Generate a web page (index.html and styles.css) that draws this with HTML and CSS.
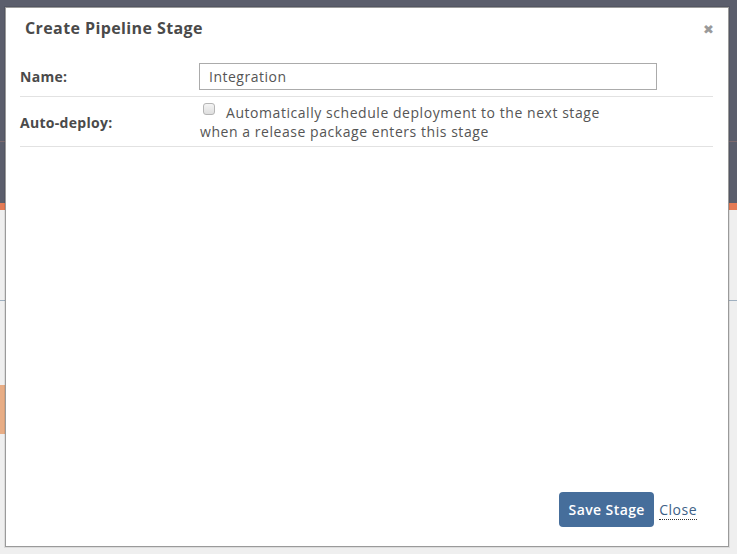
FILE: index.html
```html
<!DOCTYPE html>
<html>
<head>
<meta charset="utf-8">
<link rel="stylesheet" href="styles.css">
</head>
<body>
<div class="page">
  <div class="masthead">
    <div class="masthead-top"></div>
    <div class="masthead-line"></div>
    <div class="masthead-bottom"></div>
  </div>
  <div class="accent-bar"></div>
  <div class="content">
    <div class="content-gap"></div>
    <div class="content-rule"></div>
    <div class="content-gap2"></div>
    <div class="content-block"></div>
  </div>
</div>

<div class="modal">
  <div class="modal-header">
    <h2 class="modal-title">Create Pipeline Stage</h2>
    <span class="modal-close">&#x2716;</span>
  </div>
  <div class="modal-body">
    <div class="form-row row-name">
      <label class="form-label">Name:</label>
      <div class="form-field">
        <input class="text-input" type="text" value="Integration">
      </div>
    </div>
    <div class="form-row row-deploy">
      <label class="form-label">Auto-deploy:</label>
      <div class="form-field deploy-text">
        <span class="check"></span>Automatically schedule deployment to the next stage<br>when a release package enters this stage
      </div>
    </div>
  </div>
  <div class="modal-footer">
    <button class="btn-save">Save Stage</button>
    <a class="link-close">Close</a>
  </div>
</div>
</body>
</html>
```

FILE: styles.css
```css
* { box-sizing: border-box; }
html, body {
  margin: 0;
  padding: 0;
  width: 737px;
  height: 554px;
  overflow: hidden;
  background: #efefef;
  font-family: "Open Sans", "Liberation Sans", sans-serif;
}
.page { display: flex; flex-direction: column; width: 737px; height: 554px; }
.masthead { display: flex; flex-direction: column; }
.masthead-top { height: 141px; background: #5b5e6c; }
.masthead-line { height: 1px; background: #7d6a6e; }
.masthead-bottom { height: 61px; background: #5b5e6c; }
.accent-bar { height: 7px; background: #e57b55; }
.content { display: flex; flex-direction: column; flex: 1; }
.content-gap { height: 90px; }
.content-rule { height: 1px; background: #9fb0c0; }
.content-gap2 { height: 84px; }
.content-block { height: 49px; width: 6px; background: #e8ad85; }

.modal {
  position: absolute;
  left: 5px;
  top: 7px;
  width: 724px;
  height: 540px;
  background: #fff;
  border: 1px solid #9a9a9a;
  box-shadow: 0 0 0 1px rgba(0,0,0,0.08);
  display: flex;
  flex-direction: column;
}
.modal-header {
  display: flex;
  align-items: center;
  justify-content: space-between;
  padding: 0 14px 2px 19px;
  height: 42px;
}
.modal-title {
  margin: 0;
  font-size: 16px;
  font-weight: 700;
  letter-spacing: 0.4px;
  color: #4a4a4a;
}
.modal-close {
  font-size: 13px;
  color: #9a9a9a;
  line-height: 1;
  margin-top: 2px;
}
.modal-body {
  padding: 0 15px 0 14px;
  margin-top: 6px;
  flex: 1;
}
.form-row {
  display: flex;
  align-items: center;
  border-bottom: 1px solid #e2e2e2;
}
.row-name { padding: 7px 0 6px; }
.row-deploy { padding: 6px 0 5px; }
.form-label {
  width: 179px;
  flex: none;
  font-size: 14px;
  font-weight: 700;
  letter-spacing: 0.3px;
  color: #4a4a4a;
}
.form-field { flex: 1; }
.text-input {
  display: block;
  width: 458px;
  height: 27px;
  border: 1px solid #ababab;
  padding: 0 9px;
  font-family: "Open Sans", "Liberation Sans", sans-serif;
  font-size: 14px;
  letter-spacing: 0.5px;
  color: #555;
  outline: none;
}
.deploy-text {
  font-size: 14px;
  line-height: 19px;
  letter-spacing: 0.55px;
  color: #555;
  padding-left: 1px;
}
.check {
  display: inline-block;
  width: 12px;
  height: 12px;
  border: 1px solid #b5b5b5;
  border-radius: 3px;
  background: linear-gradient(#f4f4f4, #dedede);
  margin: 0 11px 0 3px;
  vertical-align: 3px;
}
.modal-footer {
  display: flex;
  justify-content: flex-end;
  align-items: center;
  padding: 0 31px 19px 0;
  gap: 5px;
}
.btn-save {
  height: 35px;
  width: 95px;
  border: none;
  border-radius: 4px;
  background: #466e9b;
  color: #fff;
  font-family: "Open Sans", "Liberation Sans", sans-serif;
  font-size: 14px;
  font-weight: 600;
  letter-spacing: 0.4px;
  padding: 0;
}
.link-close {
  font-size: 14px;
  letter-spacing: 0.5px;
  color: #3d5f86;
  border-bottom: 1px dotted #333;
  line-height: 18px;
  margin-top: 2px;
}
```
